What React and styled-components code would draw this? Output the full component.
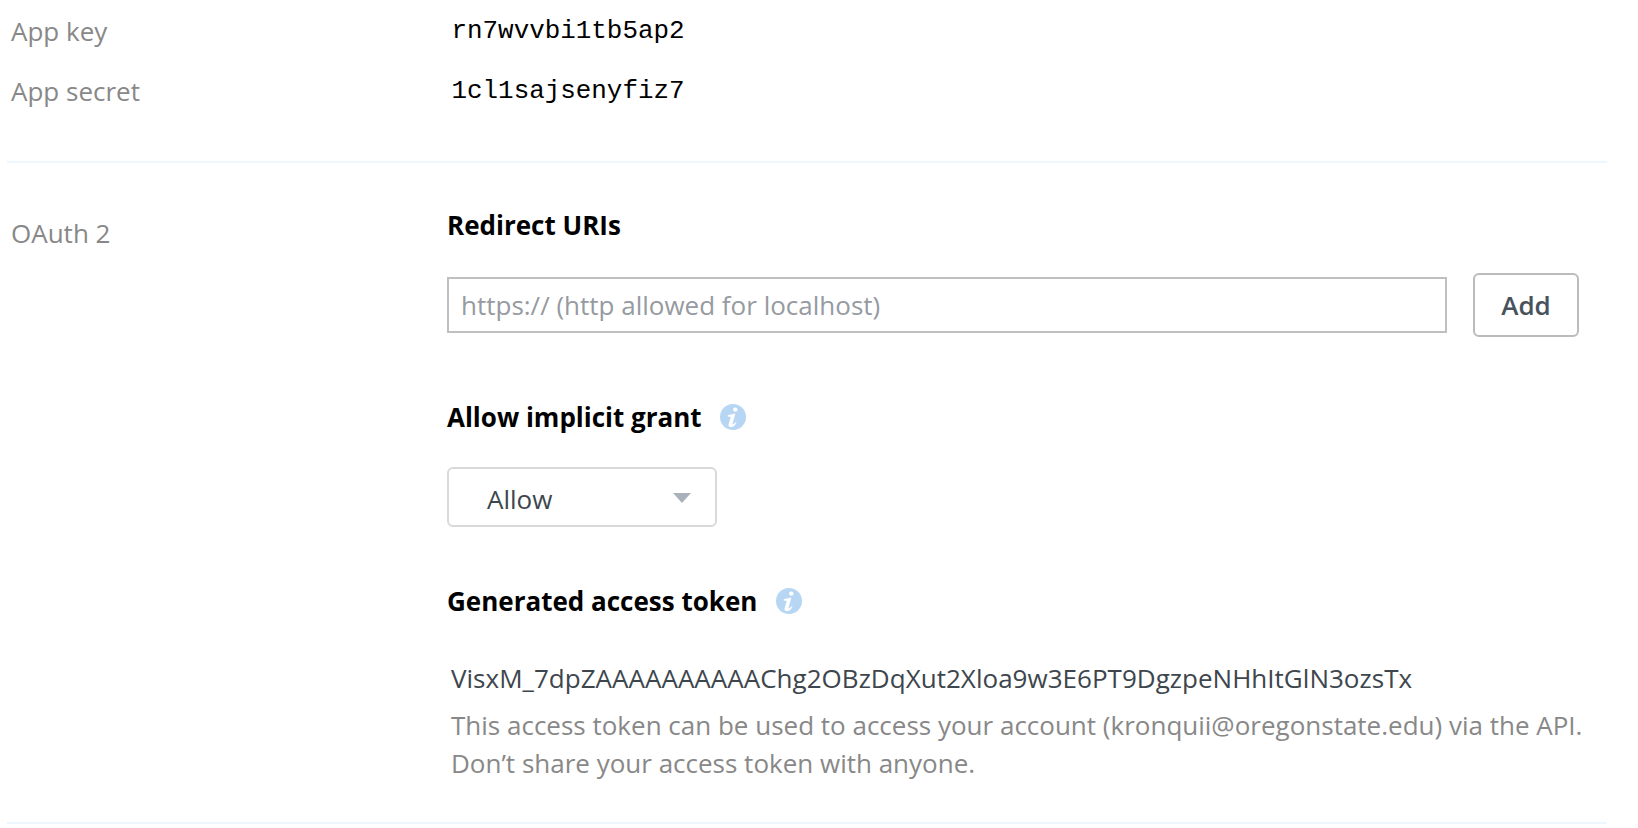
import React from "react";
import styled, { createGlobalStyle } from "styled-components";

const Global = createGlobalStyle`
  * { box-sizing: border-box; }
  body { margin: 0; background: #fff; font-family: "Open Sans", sans-serif; font-size: 26px; overflow: hidden; }
`;
const Page = styled.main`
  width: 1600px;
  margin-left: 7px;
  height: 828px;
`;
const Section = styled.section`
  border-bottom: 2px solid #eef7fe;
  height: ${(p) => p.$h}px;
`;
const Row = styled.div`
  display: flex;
  padding-top: ${(p) => p.$top || 0}px;
  height: ${(p) => (p.$h ? `${p.$h}px` : "auto")};
`;
const Label = styled.div`
  width: 440px;
  padding: ${(p) => p.$drop || 0}px 0 0 4px;
  flex: none;
  color: #888;
  line-height: 36px;
  white-space: nowrap;
`;
const Mono = styled.div`
  font-family: "Liberation Mono", monospace;
  font-size: 25.9px;
  line-height: 36px;
  color: #000;
  padding-left: 4.5px;
`;
const Content = styled.div`
  width: 1160px;
  flex: none;
`;
const Heading = styled.h2`
  display: flex;
  align-items: center;
  gap: 18.5px;
  margin: 0;
  height: 36px;
  font-size: 26px;
  font-weight: 700;
  color: #000;
  white-space: nowrap;
`;
const Field = styled.div`
  display: flex;
  align-items: center;
  gap: 26px;
  margin: 30px 0 62px;
`;
const Input = styled.input`
  width: 1000px;
  height: 56px;
  border: 2px solid #bfbfbf;
  padding: 0 12px;
  font: 26px "Open Sans", sans-serif;
  outline: none;
  &::placeholder { color: #969aa1; opacity: 1; }
`;
const Button = styled.button`
  width: 106px;
  height: 64px;
  border: 2px solid #bbb;
  border-radius: 6px;
  background: #fff;
  color: #47525d;
  font: 600 26px "Open Sans", sans-serif;
  padding: 0;
`;
const Select = styled.button`
  display: flex;
  align-items: center;
  justify-content: space-between;
  width: 270px;
  height: 60px;
  margin: 32px 0 56px;
  padding: 4px 24px 0 38px;
  border: 2px solid #d9d9d9;
  border-radius: 6px;
  background: #fff;
  color: #3d464d;
  font: 26px "Open Sans", sans-serif;
  svg { margin-bottom: 2px; }
`;
const Token = styled.div`
  margin: 41px 0 0 4px;
  line-height: 36px;
  letter-spacing: 0.02px;
  color: #3d464d;
  white-space: nowrap;
`;
const Note = styled.p`
  margin: 10px 0 0 4px;
  line-height: 38px;
  color: #888;
  white-space: nowrap;
`;
const Info = () => (
  <svg width="26" height="26" viewBox="0 0 26 26">
    <circle cx="13" cy="13" r="13" fill="#b7d6f3" />
    <circle cx="15.3" cy="5.6" r="2.2" fill="#fff" />
    <path d="M8 11.2L15.2 9.7L12.4 19.4Q12 21 13.2 20.3Q14.3 19.7 15.2 18.4L16.3 19Q14 22.9 11.1 23.1Q8 23.1 8.8 20L10.7 13.7Q11 12.5 9.8 12.5L8 12.6Z" fill="#fff" stroke="#fff" strokeWidth="0.3" />
  </svg>
);

export default function App() {
  return (
    <Page>
      <Global />
      <Section $h={163}>
        <Row $top={13} $h={73}><Label>App key</Label><Mono>rn7wvvbi1tb5ap2</Mono></Row>
        <Row $h={60}><Label>App secret</Label><Mono>1cl1sajsenyfiz7</Mono></Row>
      </Section>
      <Section $h={661}>
        <Row $top={44}>
          <Label $drop={8}>OAuth 2</Label>
          <Content>
            <Heading>Redirect URIs</Heading>
            <Field>
              <Input placeholder="https:// (http allowed for localhost)" />
              <Button>Add</Button>
            </Field>
            <Heading>Allow implicit grant<Info /></Heading>
            <Select>Allow<svg width="18" height="10" viewBox="0 0 18 10"><path d="M0 0H18L9 10Z" fill="#a9b2ba" /></svg></Select>
            <Heading>Generated access token<Info /></Heading>
            <Token>VisxM_7dpZAAAAAAAAAAChg2OBzDqXut2Xloa9w3E6PT9DgzpeNHhItGlN3ozsTx</Token>
            <Note>This access token can be used to access your account (kronquii@oregonstate.edu) via the API.<br />Don’t share your access token with anyone.</Note>
          </Content>
        </Row>
      </Section>
    </Page>
  );
}
